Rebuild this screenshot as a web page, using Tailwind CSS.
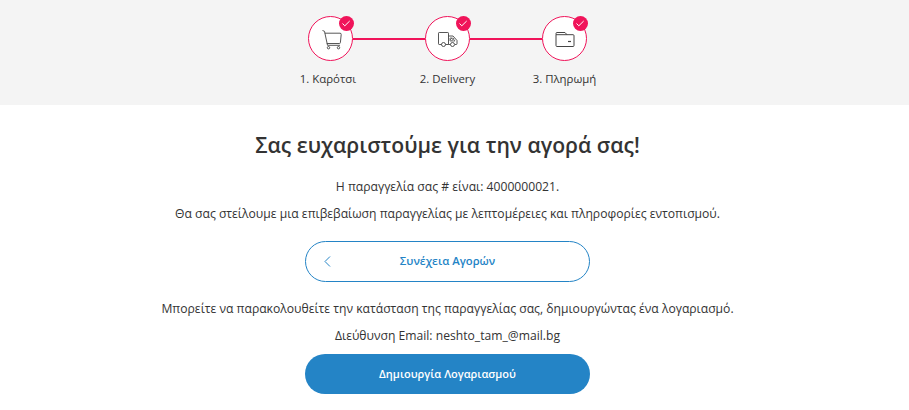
<!DOCTYPE html>
<html lang="el">
<head>
    <meta charset="UTF-8">
    <title>Checkout success</title>
    <script src="https://cdn.jsdelivr.net/npm/@tailwindcss/browser@4"></script>
</head>
<body class="bg-white h-[410px] overflow-hidden font-['Open_Sans','Noto_Sans',sans-serif] text-[12.150px] text-[#333]">
    <!-- Steps -->
    <div class="bg-[#f4f4f4] h-[105px] pt-[16px] pr-[14px] flex flex-col items-center">
        <div class="flex items-center">
            <div class="relative flex items-center justify-center w-[45px] h-[45px] rounded-full border-[1.5px] border-[#f0145a] bg-white">
                <svg class="w-[24px] h-[24px]" viewBox="0 0 24 24" fill="none" stroke="#444" stroke-width=".9">
                    <path d="M3.500 3.500l2 .8 3 14h12.500"/>
                    <path d="M5.800 6.200h15.200a1.200 1.200 0 0 1 1.200 1.300l-.8 8a1 1 0 0 1-1 1H7.800"/>
                    <circle cx="9.500" cy="20.700" r="1.200"/>
                    <circle cx="19.500" cy="20.700" r="1.200"/>
                </svg>
                <span class="absolute -top-[1.500px] -right-[1.500px] flex items-center justify-center w-[15px] h-[15px] rounded-full bg-[#f0145a]">
                    <svg class="w-[10px] h-[9px]" viewBox="0 0 10 9" fill="none" stroke="#fff" stroke-width="1"><path d="M1.500 4.500l2.300 2.300L8.700 2"/></svg>
                </span>
            </div>
            <div class="w-[72px] h-[2px] bg-[#f0145a]"></div>
            <div class="relative flex items-center justify-center w-[45px] h-[45px] rounded-full border-[1.5px] border-[#f0145a] bg-white">
                <svg class="w-[24px] h-[24px]" viewBox="0 0 24 24" fill="none" stroke="#444" stroke-width=".9">
                    <path d="M5.500 17.500H3.200a.7.700 0 0 1-.7-.7V6.200a.7.700 0 0 1 .7-.7h8.600a.7.700 0 0 1 .7.700v11.300H9.500"/>
                    <path d="M12.500 9h4.500l4 4.500v3.300a.7.700 0 0 1-.7.700h-1.300M14.500 17.500h-2"/>
                    <path d="M14 11h2.500l2.500 3h-5zM14 13l2-2M15.500 14l2.500-3" stroke-width=".7"/>
                    <circle cx="7.500" cy="17.500" r="2"/>
                    <circle cx="16.500" cy="17.500" r="2"/>
                </svg>
                <span class="absolute -top-[1.500px] -right-[1.500px] flex items-center justify-center w-[15px] h-[15px] rounded-full bg-[#f0145a]">
                    <svg class="w-[10px] h-[9px]" viewBox="0 0 10 9" fill="none" stroke="#fff" stroke-width="1"><path d="M1.500 4.500l2.300 2.300L8.700 2"/></svg>
                </span>
            </div>
            <div class="w-[72px] h-[2px] bg-[#f0145a]"></div>
            <div class="relative flex items-center justify-center w-[45px] h-[45px] rounded-full border-[1.5px] border-[#f0145a] bg-white">
                <svg class="w-[24px] h-[24px]" viewBox="0 0 24 24" fill="none" stroke="#444" stroke-width="1">
                    <path d="M3 7.500V6.500a1 1 0 0 1 1-1h8l2 2.200h6a1 1 0 0 1 1 1v9.800a1 1 0 0 1-1 1H4a1 1 0 0 1-1-1z"/>
                    <path d="M3 7.700h11"/>
                    <path d="M15 14.500h3" stroke-width="1.200"/>
                </svg>
                <span class="absolute -top-[1.500px] -right-[1.500px] flex items-center justify-center w-[15px] h-[15px] rounded-full bg-[#f0145a]">
                    <svg class="w-[10px] h-[9px]" viewBox="0 0 10 9" fill="none" stroke="#fff" stroke-width="1"><path d="M1.500 4.500l2.300 2.300L8.700 2"/></svg>
                </span>
            </div>
        </div>
        <div class="flex mt-[10px] text-[11.400px] leading-[16px]">
            <span class="w-[117px] text-center pr-[5px]">1. Καρότσι</span>
            <span class="w-[117px] text-center">2. Delivery</span>
            <span class="w-[117px] text-center">3. Πληρωμή</span>
        </div>
    </div>
    <!-- Success -->
    <div class="flex flex-col items-center pr-[14px]">
        <h1 class="mt-[25px] text-[21.200px] leading-[30px] font-semibold">Σας ευχαριστούμε για την αγορά σας!</h1>
        <p class="mt-[19px] leading-[16px]">Η παραγγελία σας # είναι: 4000000021.</p>
        <p class="mt-[11px] leading-[16px]">Θα σας στείλουμε μια επιβεβαίωση παραγγελίας με λεπτομέρειες και πληροφορίες εντοπισμού.</p>
        <a class="relative mt-[19px] flex items-center justify-center w-[285px] h-[41px] rounded-full border border-[#2484c6] text-[11.300px] text-[#2484c6] font-semibold">
            <svg class="absolute left-[18px] top-[14px] w-[7px] h-[11px]" viewBox="0 0 7 11" fill="none" stroke="#2484c6" stroke-width="1"><path d="M6 .5l-5 5 5 5"/></svg>
            Συνέχεια Αγορών
        </a>
        <p class="mt-[19px] leading-[16px]">Μπορείτε να παρακολουθείτε την κατάσταση της παραγγελίας σας, δημιουργώντας ένα λογαριασμό.</p>
        <p class="mt-[11px] leading-[16px]">Διεύθυνση Email: neshto_tam_@mail.bg</p>
        <a class="mt-[10px] flex items-center justify-center w-[285px] h-[40px] rounded-full bg-[#2484c6] text-[11px] text-white font-semibold">Δημιουργία Λογαριασμού</a>
    </div>
</body>
</html>
